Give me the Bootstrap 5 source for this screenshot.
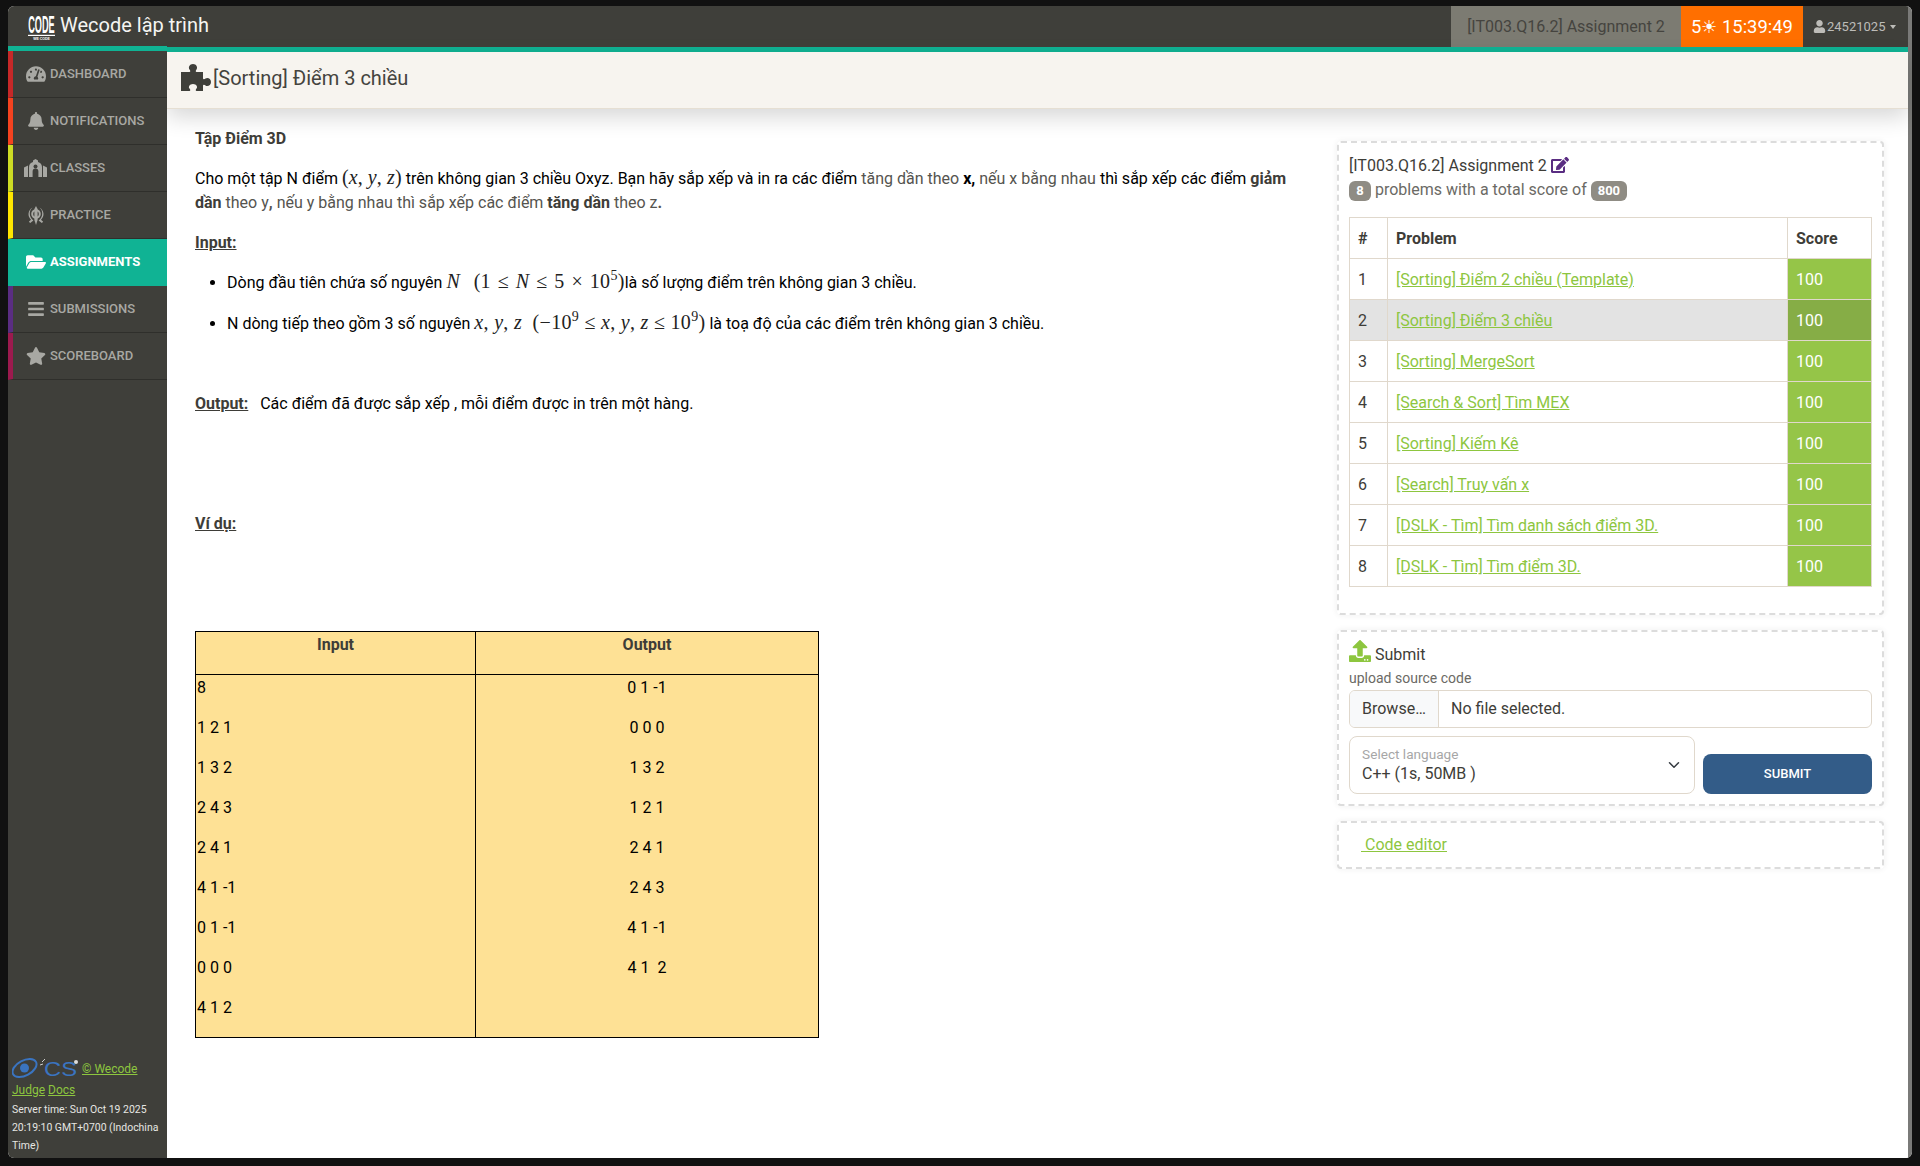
<!DOCTYPE html>
<html lang="vi">
<head>
<meta charset="utf-8">
<title>Wecode</title>
<link href="https://cdn.jsdelivr.net/npm/bootstrap@5.3.0/dist/css/bootstrap.min.css" rel="stylesheet">
<style>
html,body{height:100%;}
body{background:#111;font-family:Roboto,"Liberation Sans",sans-serif;font-size:16px;color:#3e3d38;padding:6px 8px 8px;overflow:hidden;}
svg{fill:currentColor;display:inline-block;}
.frame{height:1152px;border-radius:6px;overflow:hidden;background:#fff;}
.frame-in{min-width:0;}
.scroll-strip{width:4px;background:#7a7a78;flex:none;}
.topbar{height:41px;background:#3f3f3a;padding:0;flex-wrap:nowrap;}
.brand-link{color:#f5f5f2;font-size:20px;text-decoration:none;padding-left:20px;gap:5px;line-height:35px;}
.brand-link span{margin-bottom:2px;}
.logo-svg{width:27px;height:24px;margin-top:3px;}
.asg-box{background:#7c7b72;color:#45443f;height:41px;width:230px;line-height:41px;text-align:center;}
.clock-box{background:#ff6f00;color:#fff;height:41px;width:122px;line-height:41px;text-align:center;font-size:18.4px;}
.user-box{color:#bdbcb8;font-size:13px;width:105px;padding-left:10px;gap:1px;}
.user-box svg{width:13px;height:13px;}
.caret-tri{border-top:4px solid #bdbcb8;border-left:3.5px solid transparent;border-right:3.5px solid transparent;margin-left:4px;}
.body-row{height:1111px;}
.side{width:159px;flex:none;background:#3f3f3a;border-top:5px solid #10b394;margin-top:-1px;position:relative;z-index:2;}
.side-item{height:47px;color:#a8a8a3;font-size:13px;font-weight:500;text-decoration:none;border-bottom:1px solid #2f2f2b;border-left:5px solid var(--mark);padding-left:8px;white-space:nowrap;}
.side-item.on{--mark:#10b394;background:#10b394;border-bottom-color:#10b394;color:#fff;font-weight:700;}
.ico-cell{width:29px;height:20px;flex:none;display:flex;justify-content:center;align-items:center;}
.foot-box{padding:0 2px 3px 4px;font-size:10.45px;line-height:18px;color:#e6e6e2;margin-top:auto;}
.foot-box a{color:#8dc63f;}
.foot-links{line-height:21px;font-size:12px;}
.mini-logo{width:67px;height:22px;vertical-align:-6px;}
.main-side{min-width:0;border-top:5px solid #10b394;background:#fff;}
.head-strip{height:57px;background:#f7f4ef;border-bottom:1px solid #e6dfd3;box-shadow:0 8px 22px rgba(0,0,0,.16);padding-left:14px;font-size:20px;color:#44433e;gap:2px;position:relative;z-index:1;}
.head-strip span{margin-bottom:4px;}
.head-strip svg{width:30px;height:30px;color:#3f3f3a;margin-bottom:2px;}
.left-col{width:1110px;margin-left:28px;padding-top:18px;flex:none;}
.left-col p{margin-bottom:16px;line-height:24px;}
.ink{color:#000;}
.soft{color:#55544f;}
.under-b{font-weight:700;text-decoration:underline;color:#3e3d38;}
.math{font-family:"Liberation Serif",serif;font-size:20px;line-height:1;color:#222;white-space:nowrap;letter-spacing:.3px;}
.math i{font-style:italic;}
.math sup{font-size:14px;top:-.55em;line-height:0;}
.math-p{letter-spacing:.1px;}
.math-a{word-spacing:1.5px;}
.task-list{padding-left:32px;margin-bottom:0;color:#000;}
.task-list li{margin-bottom:17px;line-height:24px;}
.gap-out{margin-top:56px;}
.gap-vd{margin-top:96px;}
.sample-tbl{width:624px;table-layout:fixed;border-collapse:collapse;background:#fee195;margin-top:95px;color:#000;}
.sample-tbl td,.sample-tbl th{border:1px solid #000;padding:1px;vertical-align:top;}
.sample-tbl th{color:#3e3d38;text-align:center;font-weight:700;}
.sample-tbl p{white-space:pre;}
.col-in{width:280px;}
.right-col{width:547px;margin-left:32px;padding-top:32px;flex:none;}
.dash-panel{border:2px dashed #dcdcdc;border-radius:4px;box-shadow:0 0 6px rgba(0,0,0,.07);padding:10px;background:#fff;}
.panel-a{height:474px;}
.panel-b{height:176px;margin-top:15px;padding-top:7px;}
.panel-c{height:48px;margin-top:15px;padding-top:10px;padding-left:22px;}
.line-title{line-height:24px;height:24px;margin-top:1px;}
.line-title svg{width:18px;height:16px;color:#5a2d82;vertical-align:-2px;}
.line-sub{color:#6b6a65;line-height:24px;height:24px;margin-bottom:15px;}
.gray-pill{background:#8f8c84;color:#fff;font-size:13px;font-weight:700;border-radius:6px;padding:2px 7px;line-height:16px;display:inline-block;}
.pill-one{width:22px;padding:2px 0;text-align:center;}
.prob-tbl{border-color:#e0d8cc;margin:0;color:#3e3d38;table-layout:fixed;width:523px;}
.prob-tbl td,.prob-tbl th{padding:9px 8px 7px;height:41px;line-height:24px;background:transparent;box-shadow:none;}
.prob-tbl a{color:#8dc63f;}
.prob-tbl .pass{background:#95c548;color:#fff;}
.prob-tbl tr.here td{background:#e3e3e3;}
.prob-tbl tr.here td.pass{background:#86ad46;}
.w-num{width:38px;}
.w-score{width:84px;}
.sub-title{line-height:24px;height:26px;}
.sub-title svg{width:22px;height:24px;color:#8dc63f;vertical-align:-3px;}
.hint{font-size:14px;color:#6b6a65;line-height:21px;margin-top:3px;height:21px;}
.file-row{height:38px;border:1px solid #e0d8cc;border-radius:6px;overflow:hidden;margin-top:1px;}
.file-btn{width:89px;background:#f8f9fa;border-right:1px solid #e0d8cc;padding-left:12px;line-height:36px;}
.file-name{padding-left:12px;line-height:36px;}
.lang-wrap{width:346px;}
.lang-wrap .form-select{border-color:#e0d8cc;border-radius:8px;color:#3e3d38;padding-top:1.7rem;}
.lang-wrap label{color:#777;padding-top:1.05rem;}
.go-btn{width:169px;height:40px;background:#335c88;color:#fff;border:0;border-radius:8px;font-size:13px;font-weight:500;}
.go-row{margin-top:8px;gap:8px;}
.code-link{color:#8dc63f;}
</style>
</head>
<body>
<div class="frame d-flex">
<div class="frame-in flex-grow-1 d-flex flex-column">
  <nav class="navbar topbar d-flex justify-content-between">
    <a class="brand-link d-flex align-items-center" href="#">
      <svg class="logo-svg" viewBox="0 0 27 24"><text transform="scale(1 2.3)" x="13.5" y="7.6" text-anchor="middle" font-family="Liberation Sans" font-weight="700" font-size="10" textLength="26.5" lengthAdjust="spacingAndGlyphs" fill="#fff">CODE</text><rect x="0" y="18.800" width="27" height="1.200" fill="#fff"/><text x="13.5" y="23.500" text-anchor="middle" font-family="Liberation Sans" font-weight="700" font-size="3.500" fill="#fff">WE CODE</text></svg>
      <span>Wecode lập trình</span>
    </a>
    <div class="d-flex align-items-center">
      <div class="asg-box">[IT003.Q16.2] Assignment 2</div>
      <div class="clock-box">5☀ 15:39:49</div>
      <div class="user-box d-flex align-items-center">
        <svg viewBox="0 0 448 512"><path d="M224 256c70.7 0 128-57.3 128-128S294.7 0 224 0 96 57.3 96 128s57.3 128 128 128zm89.6 32h-16.7c-22.2 10.2-46.9 16-72.9 16s-50.6-5.8-72.9-16h-16.7C60.2 288 0 348.2 0 422.4V464c0 26.5 21.5 48 48 48h352c26.5 0 48-21.5 48-48v-41.6c0-74.2-60.2-134.4-134.4-134.4z"/></svg>
        <span>24521025</span><span class="caret-tri"></span>
      </div>
    </div>
  </nav>
  <div class="body-row d-flex">
    <aside class="side d-flex flex-column">
      <a href="#" class="side-item d-flex align-items-center" style="--mark:#c62828"><span class="ico-cell"><svg width="20" height="18" viewBox="0 0 576 512"><path d="M288 32C128.94 32 0 160.94 0 320c0 52.8 14.25 102.26 39.06 144.8 5.61 9.62 16.3 15.2 27.44 15.2h443c11.14 0 21.83-5.58 27.44-15.2C561.75 422.26 576 372.8 576 320c0-159.06-128.94-288-288-288zm0 64c14.71 0 26.58 10.13 30.32 23.65-1.11 2.26-2.64 4.23-3.45 6.67l-9.22 27.67c-5.13 3.49-10.97 6.01-17.64 6.01-17.67 0-32-14.33-32-32S270.33 96 288 96zM96 384c-17.67 0-32-14.33-32-32s14.33-32 32-32 32 14.33 32 32-14.33 32-32 32zm48-160c-17.67 0-32-14.33-32-32s14.33-32 32-32 32 14.33 32 32-14.33 32-32 32zm246.77-72.41l-61.33 184C343.13 347.33 352 364.54 352 384c0 11.72-3.38 22.55-8.88 32H232.88c-5.5-9.45-8.88-20.28-8.88-32 0-33.94 26.5-61.43 59.9-63.59l61.34-184.01c4.17-12.56 17.73-19.45 30.36-15.17 12.57 4.19 19.35 17.79 15.17 30.36zm14.66 57.2l15.52-46.55c3.47-1.29 7.13-2.23 11.05-2.23 17.67 0 32 14.33 32 32s-14.33 32-32 32c-11.38-.01-20.89-6.28-26.57-15.22zM480 384c-17.67 0-32-14.33-32-32s14.33-32 32-32 32 14.33 32 32-14.33 32-32 32z"/></svg></span>DASHBOARD</a>
      <a href="#" class="side-item d-flex align-items-center" style="--mark:#f4421f"><span class="ico-cell"><svg width="16" height="18" viewBox="0 0 448 512"><path d="M224 512c35.32 0 63.97-28.65 63.97-64H160.03c0 35.35 28.65 64 63.97 64zm215.39-149.71c-19.32-20.76-55.47-51.99-55.47-154.29 0-77.7-54.48-139.9-127.94-155.16V32c0-17.67-14.32-32-31.98-32s-31.98 14.33-31.98 32v20.84C118.56 68.1 64.08 130.3 64.08 208c0 102.3-36.15 133.53-55.47 154.29-6 6.45-8.66 14.16-8.61 21.71.11 16.4 12.98 32 32.1 32h383.8c19.12 0 32-15.6 32.1-32 .05-7.55-2.61-15.27-8.61-21.71z"/></svg></span>NOTIFICATIONS</a>
      <a href="#" class="side-item d-flex align-items-center" style="--mark:#cddc24"><span class="ico-cell"><svg width="23" height="18" viewBox="0 0 23 18"><path d="M11.5 0 14 1.6V3c2.4.6 4 2.6 4 5v10h-3.6v-5.5a2.9 2.9 0 0 0-5.8 0V18H5V8c0-2.4 1.6-4.4 4-5V1.6z"/><path d="M0 8.5 4 6.6V18H0zM23 8.5 19 6.6V18h4z"/><circle cx="11.5" cy="7.5" r="2" fill="#3f3f3a"/></svg></span>CLASSES</a>
      <a href="#" class="side-item d-flex align-items-center" style="--mark:#ffe600"><span class="ico-cell"><svg width="18" height="19" viewBox="0 0 18 19"><path d="M9 0l1.6 3v11l-1.6 5-1.600-5V3z"/><path d="M5.5 1.6a7.500 7.500 0 0 0-1.500 12.200l-2.200 2 1.400 1.200 3.200-2.600C1.700 11 1.800 4.500 5.500 1.600zM12.500 1.600a7.500 7.500 0 0 1 1.500 12.200l2.200 2-1.400 1.200-3.200-2.600c4.700-3.400 4.600-9.900.9-12.800z"/><circle cx="9" cy="8" r="3.800" fill="none" stroke="currentColor" stroke-width="2"/></svg></span>PRACTICE</a>
      <a href="#" class="side-item on d-flex align-items-center"><span class="ico-cell"><svg width="20" height="18" viewBox="0 0 576 512"><path d="M572.694 292.093L500.27 416.248A63.997 63.997 0 0 1 444.989 448H45.025c-18.523 0-30.064-20.093-20.731-36.093l72.424-124.155A64 64 0 0 1 152 256h399.964c18.523 0 30.064 20.093 20.73 36.093zM152 224h328v-48c0-26.51-21.49-48-48-48H272l-64-64H48C21.49 64 0 85.49 0 112v278.046l69.077-118.418C86.214 242.25 117.989 224 152 224z"/></svg></span>ASSIGNMENTS</a>
      <a href="#" class="side-item d-flex align-items-center" style="--mark:#5a2d82"><span class="ico-cell"><svg width="16" height="18" viewBox="0 0 448 512"><path d="M16 132h416c8.837 0 16-7.163 16-16V76c0-8.837-7.163-16-16-16H16C7.163 60 0 67.163 0 76v40c0 8.837 7.163 16 16 16zm0 160h416c8.837 0 16-7.163 16-16v-40c0-8.837-7.163-16-16-16H16c-8.837 0-16 7.163-16 16v40c0 8.837 7.163 16 16 16zm0 160h416c8.837 0 16-7.163 16-16v-40c0-8.837-7.163-16-16-16H16c-8.837 0-16 7.163-16 16v40c0 8.837 7.163 16 16 16z"/></svg></span>SUBMISSIONS</a>
      <a href="#" class="side-item d-flex align-items-center" style="--mark:#9c1a4e"><span class="ico-cell"><svg width="20" height="18" viewBox="0 0 576 512"><path d="M259.3 17.8L194 150.2 47.9 171.5c-26.2 3.8-36.7 36.1-17.7 54.6l105.7 103-25 145.5c-4.500 26.300 23.200 46 46.400 33.700L288 439.600l130.700 68.700c23.200 12.200 50.900-7.400 46.400-33.700l-25-145.500 105.700-103c19-18.500 8.500-50.800-17.700-54.600L382 150.200 316.700 17.800c-11.700-23.600-45.600-23.900-57.400 0z"/></svg></span>SCOREBOARD</a>
      <div class="foot-box">
        <div class="foot-links"><svg class="mini-logo" viewBox="0 0 67 22"><ellipse cx="12.500" cy="11" rx="13" ry="7.500" transform="rotate(-28 12.500 11)" fill="none" stroke="#3a74c0" stroke-width="2"/><circle cx="12.500" cy="11" r="4.500" fill="#3a74c0"/><text x="32" y="19" font-family="Liberation Sans" font-size="21" fill="#3a74c0" textLength="33" lengthAdjust="spacingAndGlyphs">CS</text><path d="M30 5l3-3M28 8l3-1" stroke="#ccc" stroke-width="1"/><circle cx="64" cy="5" r="2" fill="#ddd"/></svg> <a href="#">© Wecode Judge</a> <a href="#">Docs</a></div>
        <div>Server time: Sun Oct 19 2025 20:19:10 GMT+0700 (Indochina Time)</div>
      </div>
    </aside>
    <main class="main-side flex-grow-1 d-flex flex-column">
      <div class="head-strip d-flex align-items-center">
        <svg viewBox="0 0 30 30"><path d="M0 8h8.500C9.500 8 9.500 6.500 8.500 5.500 7 3.500 8.500 0 12 0s5 3.500 3.500 5.500c-1 1-1 2.500 0 2.500H22v6.500c0 1 1.500 1 2.500 0C26.500 13 30 14.500 30 18s-3.500 5-5.500 3.500c-1-1-2.500-1-2.500 0V27h-6.500c-1 0-1-1.500 0-2.500C17 23 15.500 20 12 20s-5 3-3.500 4.500c1 1 1 2.500 0 2.500H0z"/></svg>
        <span>[Sorting] Điểm 3 chiều</span>
      </div>
      <div class="d-flex">
        <section class="left-col">
          <p><strong>Tập Điểm 3D</strong></p>
          <p><span class="ink">Cho một tập N điểm <span class="math math-p">(<i>x</i>, <i>y</i>, <i>z</i>)</span> trên không gian 3 chiều Oxyz. Bạn hãy sắp xếp và in ra các điểm</span> <span class="soft">tăng dần theo</span> <strong class="ink">x,</strong> <span class="soft">nếu x bằng nhau</span> <span class="ink">thì sắp xếp các điểm</span> <strong>giảm dần</strong> <span class="soft">theo y<strong>,</strong> nếu y bằng nhau thì sắp xếp các điểm</span> <strong>tăng dần</strong> <span class="soft">theo z<strong>.</strong></span></p>
          <p><span class="under-b">Input:</span></p>
          <ul class="task-list">
            <li>Dòng đầu tiên chứa số nguyên <span class="math math-a"><i>N</i> &nbsp;(1 ≤ <i>N</i> ≤ 5 × 10<sup>5</sup>)</span>là số lượng điểm trên không gian 3 chiều.</li>
            <li>N dòng tiếp theo gồm 3 số nguyên <span class="math"><i>x</i>, <i>y</i>, <i>z</i> &nbsp;(−10<sup>9</sup> ≤ <i>x</i>, <i>y</i>, <i>z</i> ≤ 10<sup>9</sup>)</span> là toạ độ của các điểm trên không gian 3 chiều.</li>
          </ul>
          <p class="gap-out"><span class="under-b">Output:</span> &nbsp; <span class="ink">Các điểm đã được sắp xếp , mỗi điểm được in trên một hàng.</span></p>
          <p class="gap-vd"><span class="under-b">Ví dụ:</span></p>
          <table class="sample-tbl">
            <tr><th class="col-in"><p>Input</p></th><th><p>Output</p></th></tr>
            <tr>
              <td class="col-in"><p>8</p><p>1 2 1</p><p>1 3 2</p><p>2 4 3</p><p>2 4 1</p><p>4 1 -1</p><p>0 1 -1</p><p>0 0 0</p><p>4 1 2</p></td>
              <td class="text-center"><p>0 1 -1</p><p>0 0 0</p><p>1 3 2</p><p>1 2 1</p><p>2 4 1</p><p>2 4 3</p><p>4 1 -1</p><p>4 1  2</p></td>
            </tr>
          </table>
        </section>
        <section class="right-col">
          <div class="dash-panel panel-a">
            <div class="line-title">[IT003.Q16.2] Assignment 2 <svg viewBox="0 0 576 512"><path d="M402.6 83.2l90.2 90.2c3.8 3.8 3.8 10 0 13.8L274.4 405.6l-92.8 10.3c-12.4 1.4-22.9-9.1-21.5-21.5l10.3-92.8L388.8 83.2c3.8-3.8 10-3.8 13.8 0zm162-22.9l-48.8-48.8c-15.2-15.2-39.9-15.2-55.2 0l-35.4 35.4c-3.8 3.8-3.8 10 0 13.8l90.2 90.2c3.8 3.8 10 3.8 13.8 0l35.4-35.4c15.2-15.3 15.2-40 0-55.2zM384 346.2V448H64V128h229.8c3.2 0 6.2-1.3 8.5-3.5l40-40c7.6-7.6 2.2-20.5-8.5-20.5H48C21.5 64 0 85.5 0 112v352c0 26.5 21.5 48 48 48h352c26.5 0 48-21.5 48-48V306.2c0-10.7-12.9-16-20.5-8.5l-40 40c-2.2 2.3-3.5 5.3-3.5 8.5z"/></svg></div>
            <div class="line-sub"><span class="gray-pill pill-one">8</span> problems with a total score of <span class="gray-pill">800</span></div>
            <table class="table table-bordered prob-tbl">
              <thead><tr><th class="w-num">#</th><th>Problem</th><th class="w-score">Score</th></tr></thead>
              <tbody>
                <tr><td>1</td><td><a href="#">[Sorting] Điểm 2 chiều (Template)</a></td><td class="pass">100</td></tr>
                <tr class="here"><td>2</td><td><a href="#">[Sorting] Điểm 3 chiều</a></td><td class="pass">100</td></tr>
                <tr><td>3</td><td><a href="#">[Sorting] MergeSort</a></td><td class="pass">100</td></tr>
                <tr><td>4</td><td><a href="#">[Search &amp; Sort] Tìm MEX</a></td><td class="pass">100</td></tr>
                <tr><td>5</td><td><a href="#">[Sorting] Kiếm Kê</a></td><td class="pass">100</td></tr>
                <tr><td>6</td><td><a href="#">[Search] Truy vấn x</a></td><td class="pass">100</td></tr>
                <tr><td>7</td><td><a href="#">[DSLK - Tìm] Tìm danh sách điểm 3D.</a></td><td class="pass">100</td></tr>
                <tr><td>8</td><td><a href="#">[DSLK - Tìm] Tìm điểm 3D.</a></td><td class="pass">100</td></tr>
              </tbody>
            </table>
          </div>
          <div class="dash-panel panel-b">
            <div class="sub-title"><svg viewBox="0 0 512 512"><path d="M296 384h-80c-13.3 0-24-10.700-24-24V192h-87.700c-17.800 0-26.700-21.500-14.100-34.100L242.300 5.700c7.500-7.500 19.800-7.500 27.300 0l152.200 152.200c12.600 12.600 3.700 34.100-14.100 34.100H320v168c0 13.300-10.700 24-24 24zm216-8v112c0 13.300-10.700 24-24 24H24c-13.300 0-24-10.700-24-24V376c0-13.300 10.700-24 24-24h136v8c0 30.900 25.100 56 56 56h80c30.900 0 56-25.100 56-56v-8h136c13.300 0 24 10.700 24 24zm-124 88c0-11-9-20-20-20s-20 9-20 20 9 20 20 20 20-9 20-20zm64 0c0-11-9-20-20-20s-20 9-20 20 9 20 20 20 20-9 20-20z"/></svg> Submit</div>
            <div class="hint">upload source code</div>
            <div class="file-row d-flex"><div class="file-btn">Browse…</div><div class="file-name">No file selected.</div></div>
            <div class="d-flex align-items-end go-row">
              <div class="form-floating lang-wrap">
                <select class="form-select" id="langSel"><option>C++ (1s, 50MB )</option></select>
                <label for="langSel">Select language</label>
              </div>
              <button class="btn go-btn" type="button">SUBMIT</button>
            </div>
          </div>
          <div class="dash-panel panel-c"><a class="code-link" href="#">&nbsp;Code editor</a></div>
        </section>
      </div>
    </main>
  </div>
</div>
<div class="scroll-strip"></div>
</div>
<script src="https://cdn.jsdelivr.net/npm/bootstrap@5.3.0/dist/js/bootstrap.bundle.min.js"></script>
</body>
</html>
